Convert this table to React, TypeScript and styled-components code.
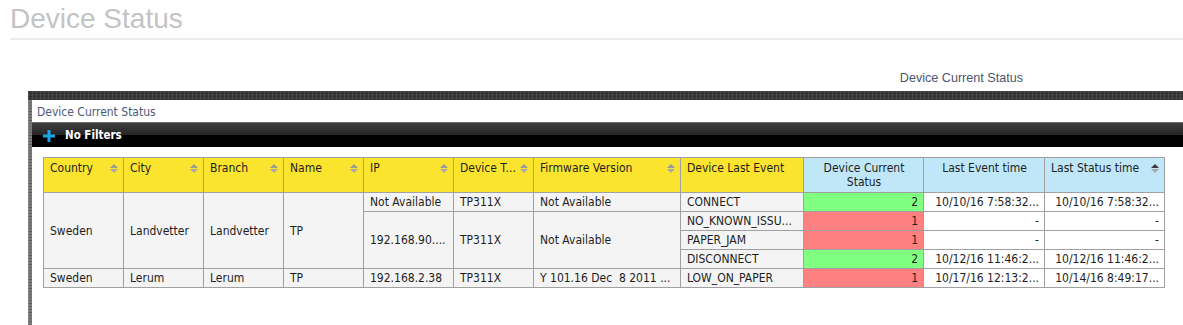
import React from "react"
import styled, { createGlobalStyle, css } from "styled-components"

const GlobalStyle = createGlobalStyle`
  html, body {
    margin: 0;
    padding: 0;
    background: #fff;
  }
  #root {
    min-height: 100vh;
    display: flex;
    flex-direction: column;
  }
`

const gridFont = `"DejaVu Sans Condensed", "DejaVu Sans", Verdana, sans-serif`

const Page = styled.div`
  flex: 1;
  display: flex;
  flex-direction: column;
  font-family: "Liberation Sans", Arial, sans-serif;
`

const PageHeader = styled.header`
  padding: 3px 0 0 10px;
`

const Title = styled.h1`
  margin: 0;
  font-size: 28px;
  line-height: 32px;
  font-weight: normal;
  color: #c3c3c3;
`

const Rule = styled.div`
  margin-top: 3px;
  height: 2px;
  background: #ececec;
`

const Caption = styled.div`
  margin: 31px 0 5px;
  padding-right: 160px;
  text-align: right;
  font-size: 12.6px;
  line-height: 15px;
  color: #4b5670;
`

// textured dark frame: 9px band on top, thin lighter strip down the left side
const Frame = styled.div`
  flex: 1;
  margin-left: 28px;
  padding: 9px 0 0 4px;
  display: flex;
  background-color: #3c3c3c;
  background-image:
    repeating-linear-gradient(90deg, rgba(255, 255, 255, 0.09) 0 1px, transparent 1px 4px),
    repeating-linear-gradient(0deg, rgba(0, 0, 0, 0.18) 0 1px, transparent 1px 3px),
    linear-gradient(#3a3a3a 0 9px, #7c7c7c 9px);
`

const Panel = styled.section`
  flex: 1;
  background: #fff;
  font-family: ${gridFont};
`

const PanelTitle = styled.div`
  height: 20px;
  padding: 2px 0 0 5px;
  font-size: 12px;
  line-height: 20px;
  color: #4d5a7a;
`

const FilterBar = styled.div`
  height: 24px;
  border-top: 1px solid #6a6a6a;
  background: linear-gradient(#3e3e3e 0, #252525 12px, #000 12px);
  display: flex;
  align-items: center;
  gap: 10px;
  padding-left: 11px;
  color: #fff;
  font-size: 11.5px;
  font-weight: bold;
`

const PlusIcon = styled.svg`
  margin-top: 2px;
  flex: none;
`

const TableWrap = styled.div`
  padding: 10px 0 0 11px;
`

const Grid = styled.table`
  border-collapse: collapse;
  table-layout: fixed;
  width: 1121px;
  font-size: 12px;
  color: #1e1e1e;
`

const HeadCell = styled.th<{ $tone: "yellow" | "blue" }>`
  height: 31px;
  padding: 3px 5px 0 6px;
  border: 1px solid #a0a0a0;
  vertical-align: top;
  font-weight: normal;
  line-height: 14px;
  background: ${(p) => (p.$tone === "yellow" ? "#fbe42e" : "#bfe7f8")};
  text-align: ${(p) => (p.$tone === "yellow" ? "left" : "center")};
`

const HeadInner = styled.div`
  display: flex;
  align-items: center;
  justify-content: space-between;
  white-space: nowrap;
`

const SortIcon = styled.span`
  display: flex;
  flex-direction: column;
  gap: 1px;
  flex: none;
`

const Tri = styled.span<{ $down?: boolean; $dark?: boolean }>`
  width: 0;
  height: 0;
  border-left: 4px solid transparent;
  border-right: 4px solid transparent;
  ${(p) =>
    p.$down
      ? css`border-top: 4px solid #a8a8a8;`
      : css`border-bottom: 4px solid ${p.$dark ? "#3a3a3a" : "#9a9a9a"};`}
`

const Cell = styled.td<{ $bg?: string; $right?: boolean }>`
  height: 18px;
  padding: 0 ${(p) => (p.$right ? "5px" : "4px")} 0 6px;
  border: 1px solid #a0a0a0;
  background: ${(p) => p.$bg ?? "#f4f4f4"};
  text-align: ${(p) => (p.$right ? "right" : "left")};
  white-space: pre;
  overflow: hidden;
  line-height: 18px;
`

type Column = { title: string; width: number; tone: "yellow" | "blue"; sort?: "none" | "asc" }

const columns: Column[] = [
  { title: "Country", width: 80, tone: "yellow", sort: "none" },
  { title: "City", width: 80, tone: "yellow", sort: "none" },
  { title: "Branch", width: 80, tone: "yellow", sort: "none" },
  { title: "Name", width: 80, tone: "yellow", sort: "none" },
  { title: "IP", width: 90, tone: "yellow", sort: "none" },
  { title: "Device T...", width: 80, tone: "yellow", sort: "none" },
  { title: "Firmware Version", width: 147, tone: "yellow", sort: "none" },
  { title: "Device Last Event", width: 123, tone: "yellow" },
  { title: "Device Current Status", width: 120, tone: "blue" },
  { title: "Last Event time", width: 121, tone: "blue" },
  { title: "Last Status time", width: 120, tone: "blue", sort: "asc" },
]

type Event = { event: string; status: number; eventTime: string; statusTime: string }
type Device = { ip: string; type: string; firmware: string; events: Event[] }
type Site = { country: string; city: string; branch: string; name: string; devices: Device[] }

const sites: Site[] = [
  {
    country: "Sweden",
    city: "Landvetter",
    branch: "Landvetter",
    name: "TP",
    devices: [
      {
        ip: "Not Available",
        type: "TP311X",
        firmware: "Not Available",
        events: [{ event: "CONNECT", status: 2, eventTime: "10/10/16 7:58:32...", statusTime: "10/10/16 7:58:32..." }],
      },
      {
        ip: "192.168.90....",
        type: "TP311X",
        firmware: "Not Available",
        events: [
          { event: "NO_KNOWN_ISSU...", status: 1, eventTime: "-", statusTime: "-" },
          { event: "PAPER_JAM", status: 1, eventTime: "-", statusTime: "-" },
          { event: "DISCONNECT", status: 2, eventTime: "10/12/16 11:46:2...", statusTime: "10/12/16 11:46:2..." },
        ],
      },
    ],
  },
  {
    country: "Sweden",
    city: "Lerum",
    branch: "Lerum",
    name: "TP",
    devices: [
      {
        ip: "192.168.2.38",
        type: "TP311X",
        firmware: "Y 101.16 Dec  8 2011 ...",
        events: [{ event: "LOW_ON_PAPER", status: 1, eventTime: "10/17/16 12:13:2...", statusTime: "10/14/16 8:49:17..." }],
      },
    ],
  },
]

const statusColor = (status: number) => (status === 2 ? "#80ff80" : "#ff8080")

// one table row per event; site and device cells span their events
const renderRows = () => {
  const rows: React.ReactNode[] = []
  sites.forEach((site, si) => {
    const siteSpan = site.devices.reduce((n, d) => n + d.events.length, 0)
    site.devices.forEach((device, di) => {
      device.events.forEach((ev, ei) => {
        const firstOfSite = di === 0 && ei === 0
        const firstOfDevice = ei === 0
        rows.push(
          <tr key={`${si}-${di}-${ei}`}>
            {firstOfSite && (
              <>
                <Cell rowSpan={siteSpan}>{site.country}</Cell>
                <Cell rowSpan={siteSpan}>{site.city}</Cell>
                <Cell rowSpan={siteSpan}>{site.branch}</Cell>
                <Cell rowSpan={siteSpan}>{site.name}</Cell>
              </>
            )}
            {firstOfDevice && (
              <>
                <Cell rowSpan={device.events.length}>{device.ip}</Cell>
                <Cell rowSpan={device.events.length}>{device.type}</Cell>
                <Cell rowSpan={device.events.length}>{device.firmware}</Cell>
              </>
            )}
            <Cell>{ev.event}</Cell>
            <Cell $right $bg={statusColor(ev.status)}>
              {ev.status}
            </Cell>
            <Cell $right $bg="#fff">
              {ev.eventTime}
            </Cell>
            <Cell $right $bg="#fff">
              {ev.statusTime}
            </Cell>
          </tr>
        )
      })
    })
  })
  return rows
}

const App: React.FC = () => {
  return (
    <>
      <GlobalStyle />
      <Page>
        <PageHeader>
          <Title>Device Status</Title>
          <Rule />
        </PageHeader>
        <Caption>Device Current Status</Caption>
        <Frame>
          <Panel>
            <PanelTitle>Device Current Status</PanelTitle>
            <FilterBar>
              <PlusIcon width="12" height="12" viewBox="0 0 12 12">
                <rect x="0" y="4.5" width="12" height="3" fill="#1ba3e6" />
                <rect x="4.5" y="0" width="3" height="12" fill="#1ba3e6" />
              </PlusIcon>
              <span>No Filters</span>
            </FilterBar>
            <TableWrap>
              <Grid>
                <colgroup>
                  {columns.map((c) => (
                    <col key={c.title} style={{ width: c.width }} />
                  ))}
                </colgroup>
                <thead>
                  <tr>
                    {columns.map((c) => (
                      <HeadCell key={c.title} $tone={c.tone}>
                        {c.sort ? (
                          <HeadInner>
                            <span>{c.title}</span>
                            <SortIcon>
                              <Tri $dark={c.sort === "asc"} />
                              <Tri $down />
                            </SortIcon>
                          </HeadInner>
                        ) : (
                          c.title
                        )}
                      </HeadCell>
                    ))}
                  </tr>
                </thead>
                <tbody>{renderRows()}</tbody>
              </Grid>
            </TableWrap>
          </Panel>
        </Frame>
      </Page>
    </>
  )
}

export default App
